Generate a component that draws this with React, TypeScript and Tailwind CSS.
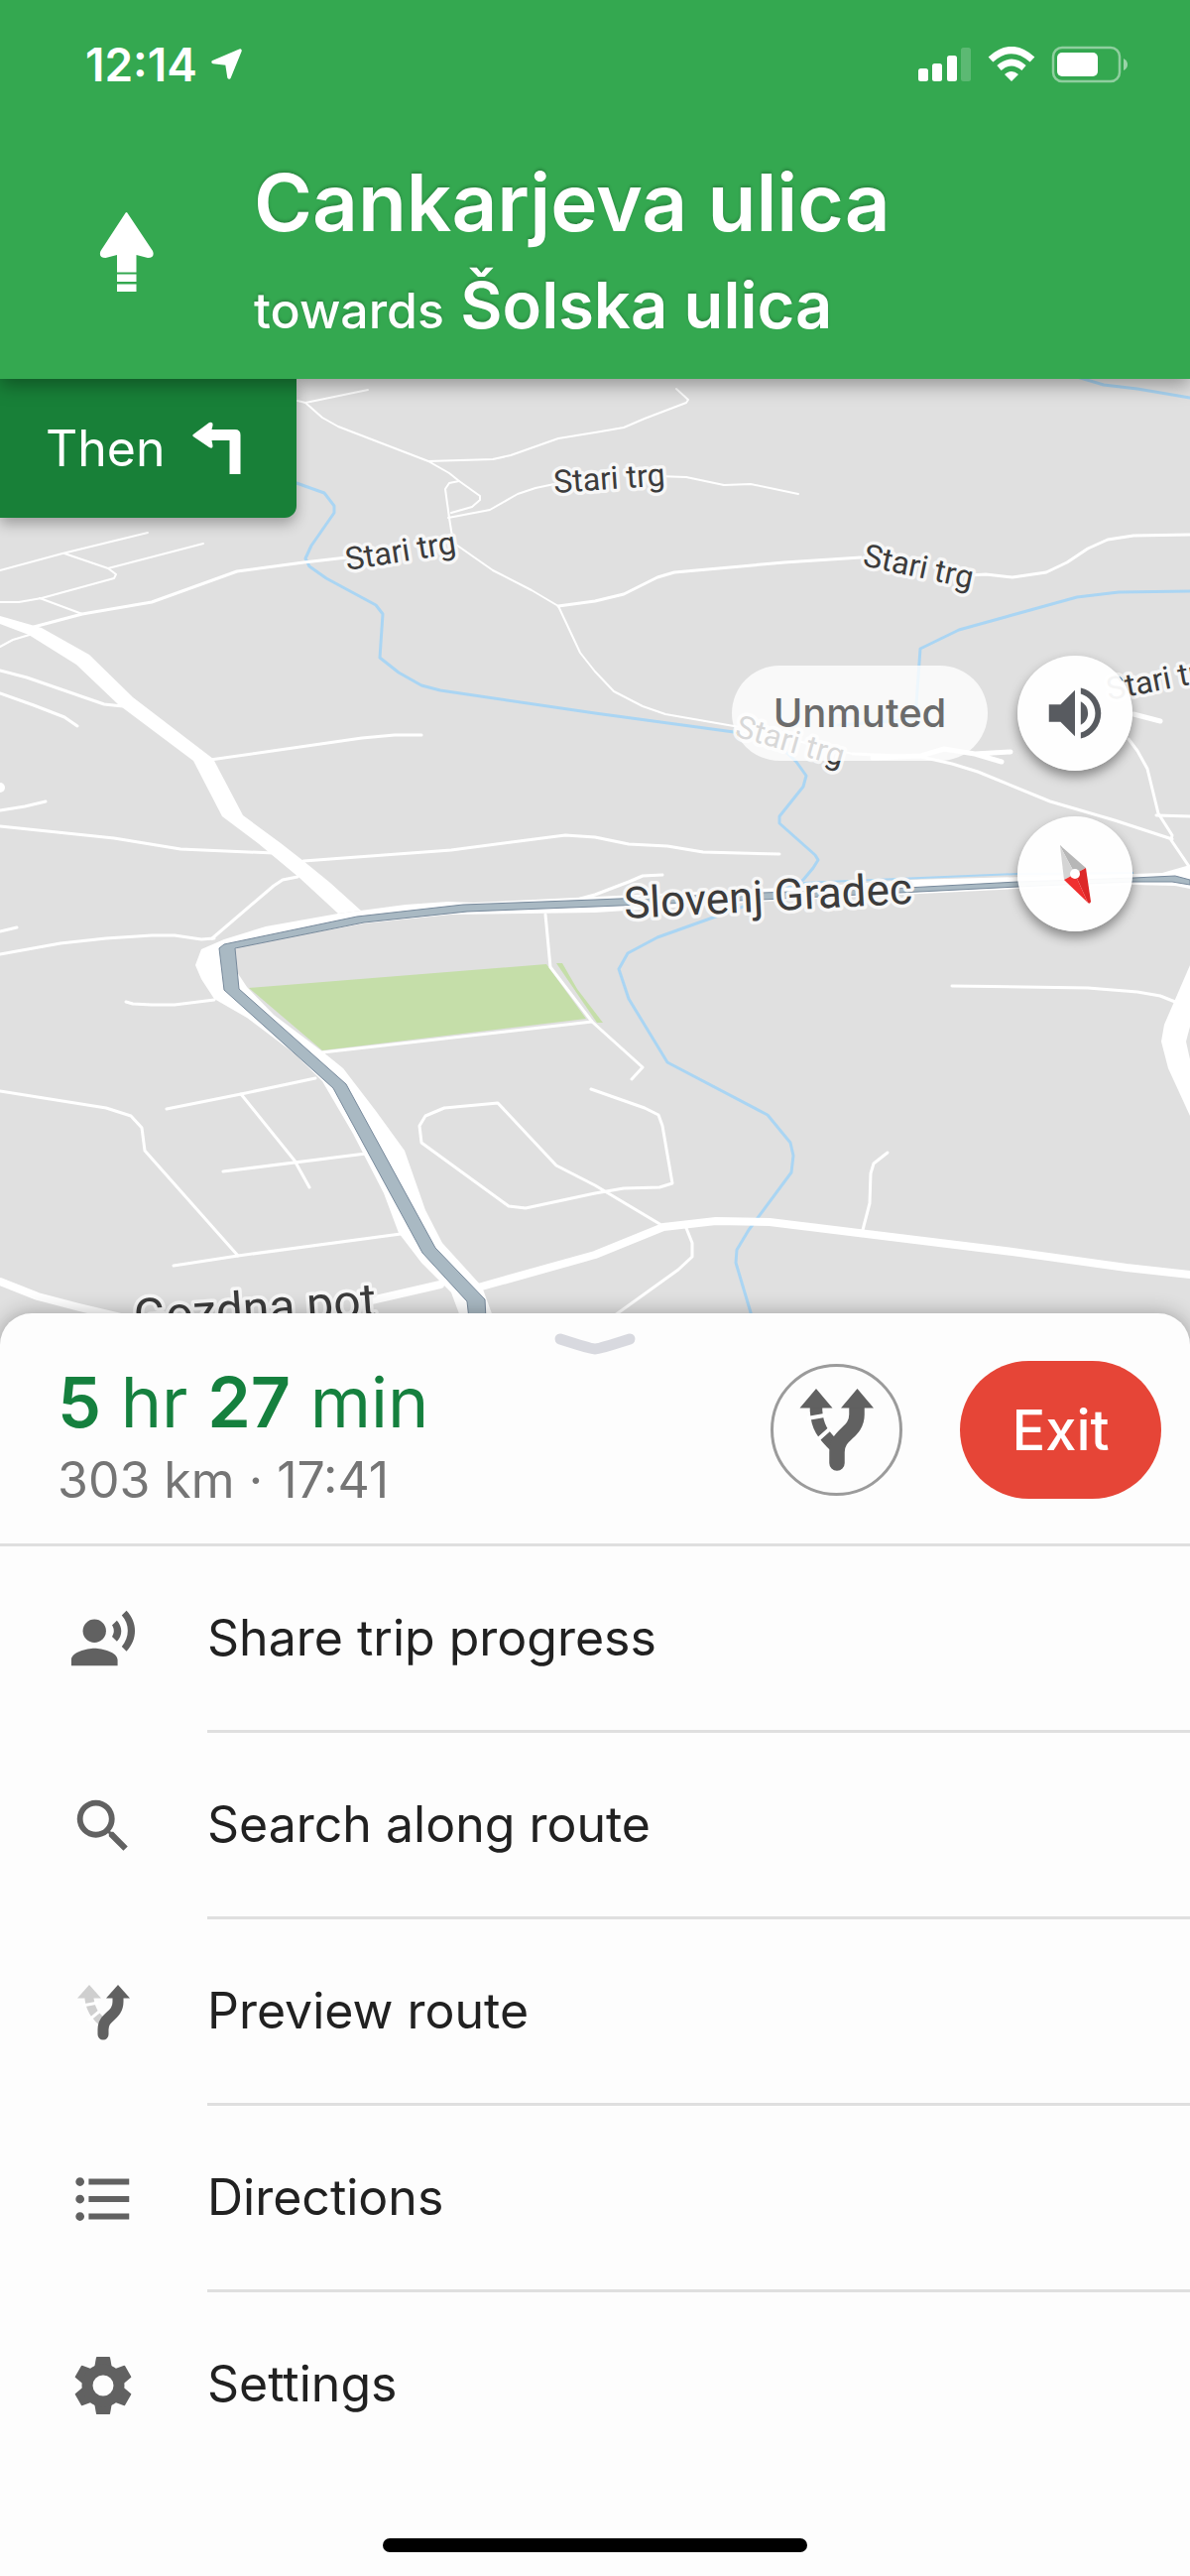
import { useState } from 'react';
import type { ReactNode } from 'react';
import {
  MdFormatListBulleted,
  MdRecordVoiceOver,
  MdSearch,
  MdVolumeOff,
  MdVolumeUp,
} from 'react-icons/md';

// Map geometry, in map units (1200 wide, origin below the header)
const RIVERS = [
  'M299 487L327 497L337 510L337 517L314 550L308 563L312 571L329 583L379 610L386 619L383 663L402 678L425 691L444 696L600 719L740 738L780 746L803 768L813 782L810 793L786 823V830L822 862L825 867L820 875L810 887L780 903L719 925L663 945L633 961L624 977L634 1007L673 1071L774 1124L797 1152L800 1165L798 1182L755 1240L743 1260L742 1273L759 1330',
  'M845 731L923 725L928 654L967 635L1086 602L1128 597L1200 596',
  'M1086 380L1113 388L1147 392L1200 401',
];

const THIN_ROADS = [
  'M0 575L63 558L149 537',
  'M65 558L109 573L117 579L115 583L42 603L19 607L0 607',
  'M109 573L205 548',
  'M40 603L83 619',
  'M0 652L13 645L33 639',
  'M300 404L308 406L371 393',
  'M308 406L325 421L341 430L432 465L453 477L463 485L484 500V504L476 511L455 517',
  'M463 485L453 487L449 493L453 522L457 547L497 575L536 595L563 611L585 658L600 677L619 697L648 712L671 720L740 732L860 760',
  'M432 465L497 463L515 459L563 442L600 436L629 431L650 422L692 406L694 403L682 392',
  'M452 522L494 514L522 498L540 492L559 488',
  'M663 480L692 481L730 489L757 488L805 498',
];

const ROADS = [
  'M34 632L83 619L153 607L239 576L306 567L350 562',
  'M0 676L27 683L105 710L124 712',
  'M0 699L34 711L65 723L78 732',
  'M212 766L365 744L398 741L425 741',
  'M0 817L25 813L46 808',
  'M0 833L115 845L182 856L276 860',
  'M306 868L455 857L570 842L600 844L634 851L673 853L709 859L786 861',
  'M563 611L600 606L629 599L663 582L680 577L791 567L868 562',
  'M977 580L994 579L1021 582L1055 577L1076 567L1097 553L1117 544L1143 540L1200 539',
  'M860 760L929 763L960 770L986 778L1059 808L1124 827L1182 846',
  'M1138 745L1147 757L1157 775L1168 820L1182 842L1181 847L1200 875',
  'M1166 822L1200 823',
  'M214 946L276 893L285 887L300 884',
  'M0 962L61 951L107 946L153 943L176 943L203 947L216 946',
  'M0 939L17 935',
  'M127 1010L134 1012L153 1013L176 1013L216 1008',
  'M550 922L555 975L597 1030L648 1076L637 1088',
  'M168 1118L243 1103L318 1087',
  'M243 1103L297 1170L312 1197',
  'M225 1181L369 1163',
  'M0 1100L107 1117L132 1125L143 1137L146 1160L240 1266',
  'M175 1276L240 1266L404 1244',
  'M667 1235L600 1195L561 1175L502 1112L448 1117L429 1125L423 1135L425 1152L513 1216L530 1218L600 1203L629 1198L665 1197L678 1193L668 1135L664 1124L650 1117L596 1098',
  'M692 1238L698 1253V1267L684 1280L620 1326',
  'M895 1162L881 1173L878 1183L877 1213L870 1240',
  'M960 994L1097 996L1147 1000L1170 1004L1185 1010',
  'M585 906L600 902L634 889L648 883L668 882',
  'M325 1061L597 1030',
];

const WIDE_ROADS = [
  'M0 1292L38 1307L80 1318L130 1330',
  'M370 1312L444 1295',
  'M482 1298L600 1265L669 1237L722 1231L776 1232L1021 1262L1136 1278L1200 1285',
];

const STREET_LABELS = [
  { text: 'Stari trg', x: 350, y: 575, angle: -9 },
  { text: 'Stari trg', x: 559, y: 497, angle: -4 },
  { text: 'Stari trg', x: 869, y: 570, angle: 12 },
  { text: 'Stari trg', x: 740, y: 742, angle: 16 },
  { text: 'Stari trg', x: 1118, y: 706, angle: -11 },
];

const MapView = () => (
  <svg
    viewBox="0 382 1200 976"
    preserveAspectRatio="xMidYMin slice"
    className="absolute inset-0 h-full w-full bg-[#e0e0e0]"
    role="img"
    aria-label="Map"
  >
    {/* Park */}
    <path
      fill="#c5dea9"
      d="M251 996L551 972L591 1027L325 1059ZM561 971H567L582 997L608 1031H602Z"
    />

    <g fill="none" strokeLinejoin="round" strokeLinecap="round">
      {RIVERS.map((d) => (
        <path key={d} d={d} stroke="#aad5f3" strokeWidth="3" />
      ))}
      {THIN_ROADS.map((d) => (
        <path key={d} d={d} stroke="#fff" strokeWidth="2" />
      ))}
      {ROADS.map((d) => (
        <path key={d} d={d} stroke="#fff" strokeWidth="3" />
      ))}
      {WIDE_ROADS.map((d) => (
        <path key={d} d={d} stroke="#fff" strokeWidth="8" />
      ))}
      <path
        d="M880 764L929 762L952 755L983 760L1019 758M983 760L1010 768M1143 720L1170 727"
        stroke="#fff"
        strokeWidth="5"
      />
    </g>
    <circle cx="0" cy="794" r="5" fill="#fff" />

    {/* Main roads widen towards the viewer */}
    <g fill="#fff">
      <path d="M0 621L42 633L90 660L134 703L215 765L245 822L283 850L306 868L333 890L364 918L341 921L302 885L260 850L224 823L195 767L119 710L77 670L29 640L0 629Z" />
      <path d="M1200 872L1172 880L1143 881L918 887L830 893L600 904L478 910L452 909L409 912L341 921L268 934L226 947L203 957L197 973L203 987L216 1007L249 1026L298 1063L325 1090L356 1143L387 1203L402 1243L425 1273L455 1303L465 1330H498L486 1297L446 1253L429 1220L408 1160L379 1120L346 1077L325 1060L276 1023L249 995L239 980L237 957L245 953L367 931L455 922L600 920L631 918L768 909L1026 896L1143 892L1185 893L1200 896Z" />
      <path d="M1200 973L1174 1033L1171 1050L1178 1077L1200 1125V1068L1196 1050L1200 1035Z" />
    </g>
    <path d="M810 890L1026 881L1143 880" fill="none" stroke="#aad5f3" strokeWidth="2" />

    {/* Active route */}
    <path
      fill="#a9b9c3"
      stroke="#788a9c"
      strokeWidth="1"
      d="M1200 887L1185 883L1143 885L1026 889L914 895L768 900L600 907L467 912L360 924L226 952L221 956L226 998L336 1097L426 1263L471 1312L473 1330H490L489 1310L439 1258L349 1093L241 997L237 956L367 930L471 919L600 914L768 907L1026 894L1143 889L1182 889L1200 892Z"
    />

    <g
      fill="#3c3c3c"
      stroke="#f7f7f7"
      strokeWidth="7"
      strokeLinejoin="round"
      className="font-['Roboto',sans-serif] [paint-order:stroke]"
    >
      {STREET_LABELS.map(({ text, x, y, angle }) => (
        <text key={x} transform={`translate(${x} ${y}) rotate(${angle})`} fontSize="32">
          {text}
        </text>
      ))}
      <text transform="translate(630 926) rotate(-3)" fontSize="44">
        Slovenj Gradec
      </text>
      <text transform="translate(136 1344) rotate(-4)" fontSize="48">
        Gozdna pot
      </text>
    </g>
  </svg>
);

const LocationArrow = () => (
  <svg viewBox="0 0 34 34" className="h-[34px] w-[34px]" fill="#fff" aria-hidden="true">
    <path
      d="M31 3L20 30L18 17Q17.900 16 17 16L4 14.500Z"
      stroke="#fff"
      strokeWidth="3.500"
      strokeLinejoin="round"
    />
  </svg>
);

const SignalIcon = () => (
  <svg viewBox="0 0 54 36" className="h-9 w-[54px]" fill="#fff" aria-hidden="true">
    <rect x="0" y="22" width="10" height="13" rx="2.500" />
    <rect x="14" y="17" width="10" height="18" rx="2.500" />
    <rect x="29" y="9" width="10" height="26" rx="2.500" />
    <rect x="43" y="1" width="10" height="34" rx="2.500" opacity=".2" />
  </svg>
);

const WifiIcon = () => (
  <svg viewBox="0 0 48 36" className="h-9 w-12" fill="none" aria-hidden="true">
    <path d="M3 13Q24 -6 45 13" stroke="#fff" strokeWidth="7" />
    <path d="M11.500 21.500Q24 10.500 36.500 21.500" stroke="#fff" strokeWidth="6.500" />
    <path d="M17 28Q24 22 31 28L24 35Z" fill="#fff" />
  </svg>
);

const BatteryIcon = () => (
  <svg viewBox="0 0 78 38" className="h-[38px] w-[78px]" fill="none" aria-hidden="true">
    <rect x="2" y="2" width="67" height="34" rx="9" stroke="#fff" strokeWidth="2.500" opacity=".45" />
    <rect x="6" y="7" width="41" height="24" rx="5" fill="#fff" />
    <path d="M73 13Q77 15 77 19T73 25Z" fill="#fff" opacity=".5" />
  </svg>
);

const StraightArrow = () => (
  <svg viewBox="0 0 60 84" className="h-[84px] w-[60px]" fill="#fff" aria-hidden="true">
    <path d="M29.500 2Q30.500 2 31 3.500L56 41Q58.500 48 51 48L39.500 45V62.500H20V45L8.500 48Q1 48 3.500 41L28 3.500Q28.500 2 29.500 2Z" />
    <path d="M20 64.500H39.500V72H20ZM20 74.500H39.500V82H20Z" />
  </svg>
);

const TurnLeftArrow = () => (
  <svg viewBox="0 0 54 60" className="h-[60px] w-[54px]" fill="#fff" aria-hidden="true">
    <path d="M4.500 15.500L20 4Q24 3 23.500 7L22.500 11H46Q51.500 11 51.500 16.500V56H40.500V22H22.500L23.500 27Q24 31 20 29L4.500 18.500Q2 17 4.500 15.500Z" />
  </svg>
);

const CompassIcon = () => (
  <svg viewBox="0 0 116 116" className="h-full w-full" aria-hidden="true">
    <path d="M43 30Q43 28 45 31L69 52L58 58Z" fill="#b7b7b7" />
    <path d="M43 30L58 58L47 64Z" fill="#d4d4d4" />
    <path d="M69 52L74 86Q73 89 71 87L58 58Z" fill="#dd2727" />
    <path d="M47 64L71 87L58 58Z" fill="#f02f2f" />
    <circle cx="58" cy="58" r="5" fill="#fff" />
  </svg>
);

const AlternateRoutesIcon = () => (
  <svg viewBox="0 0 100 100" className="h-[100px] w-[100px]" fill="none" aria-hidden="true">
    <path d="M29 26V30C30 46 35 54 50 68" stroke="#616161" strokeWidth="12.500" />
    <path d="M20 38L40 34.500M30 60L44 47.500" stroke="#fff" strokeWidth="4" />
    <path
      d="M70 24V34C70 53 50 53 50 72V83"
      stroke="#616161"
      strokeWidth="15.500"
      strokeLinecap="round"
    />
    <path d="M29 8L45.500 27.500H12.500ZM70.500 8L87 27.500H54Z" fill="#616161" />
  </svg>
);

const PreviewRouteIcon = () => (
  <svg viewBox="0 0 70 70" className="h-[70px] w-[70px]" fill="none" aria-hidden="true">
    <path d="M21 18V21C22 31 26 38 36 46" stroke="#cfcfcf" strokeWidth="9" />
    <path d="M14 28L30 25M20 43L31 34" stroke="#fff" strokeWidth="3" />
    <path
      d="M50 18V24C50 39 35 38 35 52V57"
      stroke="#616161"
      strokeWidth="11"
      strokeLinecap="round"
    />
    <path d="M21 7L33 20.500H9Z" fill="#cfcfcf" />
    <path d="M50 7L62 20.500H38Z" fill="#616161" />
  </svg>
);

const GearIcon = () => (
  <svg viewBox="0 0 70 70" className="h-[70px] w-[70px]" fill="#616161" aria-hidden="true">
    {[0, 60, 120, 180, 240, 300].map((angle) => (
      <path key={angle} d="M26 18L28 6.500Q28.200 6 29 6H41Q41.800 6 42 6.500L44 18Z" transform={`rotate(${angle} 35 35)`} />
    ))}
    <circle cx="35" cy="35" r="16" fill="none" stroke="#616161" strokeWidth="11" />
  </svg>
);

const MENU_ITEMS: { label: string; icon: ReactNode }[] = [
  { label: 'Share trip progress', icon: <MdRecordVoiceOver size={70} /> },
  { label: 'Search along route', icon: <MdSearch size={70} /> },
  { label: 'Preview route', icon: <PreviewRouteIcon /> },
  { label: 'Directions', icon: <MdFormatListBulleted size={70} /> },
  { label: 'Settings', icon: <GearIcon /> },
];

const NavigationHeader = () => (
  <header className="relative z-20 bg-[#34a850] text-white shadow-[0_6px_18px_rgba(0,0,0,0.35)]">
    {/* Status bar */}
    <div className="flex h-[130px] items-center justify-between pr-[62px] pl-[86px]">
      <div className="flex items-center gap-3">
        <span className="text-[46px] font-semibold">12:14</span>
        <LocationArrow />
      </div>
      <div className="flex items-center gap-4">
        <SignalIcon />
        <WifiIcon />
        <BatteryIcon />
      </div>
    </div>

    {/* Current street */}
    <div className="flex h-[252px] pt-[22px]">
      <div className="flex w-64 shrink-0 justify-center pt-[60px]">
        <StraightArrow />
      </div>
      <div className="[text-shadow:0_-2px_3px_rgba(0,0,0,0.2)]">
        <h1 className="text-[80px] leading-[104px] font-semibold">Cankarjeva ulica</h1>
        <p className="text-[65px] leading-[104px] font-semibold">
          <span className="text-[50px] font-medium">towards</span> Šolska ulica
        </p>
      </div>
    </div>
  </header>
);

export default function App() {
  const [muted, setMuted] = useState(false);

  return (
    <div className="flex min-h-screen flex-col bg-[#fdfdfd] font-['Inter',sans-serif]">
      <NavigationHeader />

      <main className="relative min-h-[600px] flex-1 overflow-hidden">
        <MapView />

        {/* Next maneuver */}
        <div className="absolute top-0 left-0 flex h-[140px] items-center gap-6 rounded-br-xl bg-[#188038] pr-[54px] pl-[46px] text-white shadow-[0_6px_14px_rgba(0,0,0,0.3)]">
          <span className="text-[50px]">Then</span>
          <TurnLeftArrow />
        </div>

        {/* Map controls */}
        <div className="absolute top-[279px] right-[58px] flex flex-col items-end gap-[46px]">
          <div className="flex items-center gap-[30px]">
            <span
              role="status"
              className="flex h-24 w-[258px] items-center justify-center rounded-full bg-white/80 text-[40px] font-medium text-[#6b6b6b]"
            >
              {muted ? 'Muted' : 'Unmuted'}
            </span>
            <button
              type="button"
              aria-label="Toggle sound"
              onClick={() => setMuted(!muted)}
              className="flex size-[116px] items-center justify-center rounded-full bg-white/95 text-[#585b60] shadow-[0_6px_12px_rgba(0,0,0,0.4)]"
            >
              {muted ? <MdVolumeOff size={70} /> : <MdVolumeUp size={70} />}
            </button>
          </div>
          <button
            type="button"
            aria-label="Compass"
            className="size-[116px] rounded-full bg-white/95 shadow-[0_6px_12px_rgba(0,0,0,0.4)]"
          >
            <CompassIcon />
          </button>
        </div>
      </main>

      {/* Bottom sheet */}
      <section className="relative z-10 -mt-8 rounded-t-[32px] bg-[#fdfdfd] shadow-[0_0_20px_rgba(0,0,0,0.3)]">
        <div className="flex h-[235px] flex-col border-b-3 border-[#dfdfdf]">
          <button type="button" aria-label="Collapse" className="mx-auto flex h-12 items-center pt-4">
            <svg viewBox="0 0 84 28" className="h-7 w-[84px]" fill="none" aria-hidden="true">
              <path
                d="M7 8Q38 18 42 18T77 8"
                stroke="#d8d9df"
                strokeWidth="11"
                strokeLinecap="round"
              />
            </svg>
          </button>
          <div className="flex flex-1 items-start justify-between pr-[29px] pl-[58px]">
            <div>
              <p className="text-[70px] leading-[84px] text-[#15803e]">
                <b className="font-semibold">5</b> hr <b className="font-semibold">27</b> min
              </p>
              <p className="text-[50px] leading-[72px] text-[#757575]">303 km · 17:41</p>
            </div>
            <div className="flex items-center gap-[58px]">
              <button
                type="button"
                aria-label="Alternate routes"
                className="flex size-[133px] items-center justify-center rounded-full border-3 border-[#9b9b9b]"
              >
                <AlternateRoutesIcon />
              </button>
              <button
                type="button"
                className="h-[139px] w-[203px] rounded-full bg-[#e64537] text-[56px] font-medium text-white"
              >
                Exit
              </button>
            </div>
          </div>
        </div>

        <ul>
          {MENU_ITEMS.map(({ label, icon }) => (
            <li key={label} className="group">
              <button type="button" className="flex w-full items-center gap-[70px] pl-[69px] text-left">
                <span className="shrink-0 text-[#616161]">{icon}</span>
                <span className="flex h-[188px] flex-1 items-center border-b-3 border-[#dfdfdf] text-[50px] text-[#212121] group-last:border-transparent">
                  {label}
                </span>
              </button>
            </li>
          ))}
        </ul>

        {/* Home indicator */}
        <div className="flex h-[98px] items-end justify-center pb-6">
          <div className="h-[14px] w-[428px] rounded-full bg-black" />
        </div>
      </section>
    </div>
  );
}
